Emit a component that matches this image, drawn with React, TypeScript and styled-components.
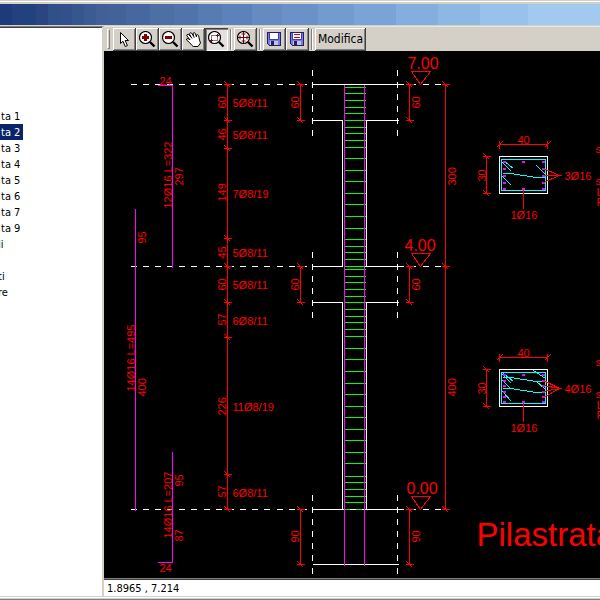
import React, { useState } from "react";
import styled, { createGlobalStyle } from "styled-components";

const GlobalStyle = createGlobalStyle`
  * { box-sizing: border-box; }
  body {
    margin: 0;
    background: #d4d0c8;
    font-family: "DejaVu Sans Condensed", "DejaVu Sans", sans-serif;
    font-size: 11px;
    line-height: 16px;
    color: #000;
  }
`;

const Window = styled.div`
  height: 100vh;
  display: flex;
  flex-direction: column;
  background: #d4d0c8;
  overflow: hidden;
`;

const FrameEdge = styled.div`
  height: 4px;
  flex: none;
  border-top: 1px solid #d4d0c8;
  &::before {
    content: "";
    display: block;
    height: 1px;
    background: #fff;
  }
`;

const TitleBar = styled.header`
  height: 21px;
  flex: none;
  margin-bottom: 1px;
  background: linear-gradient(
    to right,
    #1c3a7c 0 2%, #24407f 2% 4%, #22427e 4% 6%, #2b4583 6% 8%,
    #30508a 8% 10%, #34508c 10% 12%, #36568e 12% 14%, #3c5a94 14% 16%,
    #425f98 16% 18%, #42639a 18% 21%, #4667a0 21% 25%, #4c70a4 25% 29%,
    #5073ac 29% 33%, #577cb4 33% 37%, #5b82ba 37% 42%, #658bc0 42% 47%,
    #6a92c8 47% 53%, #729bd0 53% 59%, #7aa4d8 59% 66%, #84aedd 66% 73%,
    #8eb8e4 73% 80%, #98c2ec 80% 88%, #a2caf1 88% 100%
  );
`;

const Body = styled.div`
  flex: 1;
  min-height: 0;
  display: flex;
`;

const TreePane = styled.nav`
  width: 104px;
  flex: none;
  background: #fff;
  border-top: 1px solid #808080;
  border-right: 2px solid #d4d0c8;
  box-shadow: inset 0 1px #404040;
  padding-top: 81px;
  overflow: hidden;
`;

const Tree = styled.ul`
  list-style: none;
  margin: 0;
  padding: 0;
`;

const TreeRow = styled.li`
  height: 16px;
`;

const TreeItem = styled.button<{ $selected: boolean; $parent: boolean }>`
  display: block;
  height: 16px;
  border: 0;
  padding: 1px 3px 0 ${(p) => (p.$parent ? "0" : "1px")};
  text-indent: ${(p) => (p.$parent ? "-2px" : "0")};
  font: inherit;
  white-space: nowrap;
  color: ${(p) => (p.$selected ? "#fff" : "#000")};
  background: ${(p) => (p.$selected ? "#0a246a" : "transparent")};
`;

const Main = styled.main`
  flex: 1;
  min-width: 0;
  display: flex;
  flex-direction: column;
`;

const Toolbar = styled.div`
  height: 25px;
  flex: none;
  display: flex;
  align-items: center;
  padding-left: 3px;
  border-top: 1px solid #e8e6e0;
  overflow: hidden;
`;

const Grip = styled.span`
  width: 3px;
  height: 20px;
  margin-right: 3px;
  flex: none;
  border: 1px solid #808080;
  border-top-color: #fff;
  border-left-color: #fff;
  background: #d4d0c8;
`;

const Separator = styled.span`
  width: 2px;
  height: 21px;
  margin: 0 2px;
  flex: none;
  border-left: 1px solid #808080;
  border-right: 1px solid #fff;
`;

const ToolButton = styled.button<{ $pressed?: boolean; $wide?: boolean }>`
  width: ${(p) => (p.$wide ? "51px" : "23px")};
  height: 23px;
  flex: none;
  display: flex;
  align-items: center;
  justify-content: center;
  padding: 0;
  font: inherit;
  font-size: 12px;
  color: #000;
  border: 0;
  background: ${(p) => (p.$pressed ? "#e6dfe2" : "#d4d0c8")};
  box-shadow: ${(p) =>
    p.$pressed
      ? "inset 1px 1px #404040, inset 2px 2px #808080, inset -1px -1px #fff"
      : "inset -1px -1px #404040, inset 1px 1px #fff, inset -2px -2px #808080"};
`;

const Icon = styled.svg`
  width: 17px;
  height: 17px;
  display: block;
  fill: none;
`;

const Viewport = styled.section`
  flex: 1;
  min-height: 0;
  background: #000;
  overflow: hidden;
`;

const Drawing = styled.svg`
  display: block;
  width: 100%;
  height: 100%;
  fill: none;
`;

const Label = styled.text<{ $size?: number }>`
  font-family: "Liberation Sans", Arial, sans-serif;
  font-size: ${(p) => p.$size ?? 11}px;
  fill: #ff0000;
`;

const Status = styled.footer`
  height: 18px;
  flex: none;
  padding-left: 3px;
  background: #fff;
  border-top: 1px solid #808080;
  box-shadow: inset 0 1px #404040;
  line-height: 19px;
  white-space: nowrap;
`;

const BottomEdge = styled.div`
  height: 4px;
  flex: none;
  border-bottom: 1px solid #808080;
  &::before {
    content: "";
    display: block;
    height: 1px;
    margin-top: 1px;
    background: #fff;
  }
`;

const WHITE = "#ffffff";
const RED = "#ff0000";
const MAGENTA = "#ff00ff";
const GREEN = "#00ff00";
const CYAN = "#00ffff";
const MAROON = "#800000";

const Lens = ({ children }: { children?: React.ReactNode }) => (
  <Icon viewBox="0 0 17 17" aria-hidden="true">
    <path d="M11 11 L15.5 15.5" stroke="#000" strokeWidth="2.4" />
    <circle cx="6.5" cy="6.5" r="6" fill="#fff" stroke="#000" strokeWidth="1.2" />
    {children}
  </Icon>
);

const ArrowIcon = () => (
  <Icon viewBox="0 0 17 17" aria-hidden="true">
    <path
      d="M4.5 1.5 V12.5 L7 10.2 L9.2 15.5 L11.4 14.6 L9.2 9.5 H12.5 Z"
      fill="#fff" stroke="#000"
    />
  </Icon>
);

const HandIcon = () => (
  <Icon viewBox="0 0 17 17" aria-hidden="true">
    <path
      d="M7 14.5 L4.5 11.5 L1.5 9 Q1 7.4 3 7.6 L5 8.8 L1.8 4.8 Q1.6 3 3.5 3.4 L6 6 L4.4 2.8 Q5 1 6.7 2.2 L8.6 5.2 L8 2.4 Q9 .8 10.4 2.4 L11.4 5.8 L11.5 4 Q13 3 13.6 4.6 L14.5 9 L15.5 12 L13 15.5 H8.5 Z"
      fill="#fff" stroke="#000"
    />
    <path d="M6 6 L7 7.4 M8.6 5.2 L9.2 6.6" stroke="#000" />
  </Icon>
);

const ZoomInIcon = () => (
  <Lens>
    <path d="M6.5 3 V10 M3 6.5 H10" stroke={MAROON} strokeWidth="3" />
  </Lens>
);

const ZoomOutIcon = () => (
  <Lens>
    <path d="M3 6.5 H10" stroke={MAROON} strokeWidth="3" />
  </Lens>
);

const ZoomWindowIcon = () => (
  <Lens>
    <path d="M3.5 4.5 H9.5 V9.5 H3.5 Z" stroke="#000" strokeDasharray="1 1" />
    <path d="M8 4.5 H11 M9.5 3 V6 M2 9.5 H5 M3.5 8 V11" stroke={MAROON} />
  </Lens>
);

const ZoomAllIcon = () => (
  <Lens>
    <path d="M6.5 1 V12 M1 6.5 H12" stroke={MAROON} />
    <path
      d="M4.5 3 H8.5 M4.5 10 H8.5 M3 4.5 V8.5 M10 4.5 V8.5"
      stroke={MAROON}
    />
  </Lens>
);

const SaveIcon = ({ lined }: { lined?: boolean }) => (
  <Icon viewBox="0 0 17 17" aria-hidden="true" shapeRendering="crispEdges">
    <path d="M1.5 1.5 H14.5 V14.5 H3.5 L1.5 12.5 Z" fill="#7878f0" stroke="#202060" />
    <path d="M4 2 H12 V8 H4 Z" fill="#fff" />
    <path d="M4 10 H12 V14 H4 Z" fill="#c4c4cc" />
    <path d="M5 10 H8 V14 H5 Z" fill="#202060" />
    <path d="M3.5 2 V8.5 H12.5 V2" stroke="#4040b0" />
    {lined && <path d="M5 3.5 H11 M5 6.5 H11" stroke="#d00000" />}
  </Icon>
);

const stirrups = [
  87, 93, 100, 107, 113, 120, 127, 133, 140, 147, 158, 170, 181, 193, 204, 216,
  228, 239, 246, 252, 259, 266, 269, 276, 282, 289, 296, 302, 309, 316, 322, 329,
  336, 348, 359, 371, 383, 394, 406, 417, 429, 440, 452, 463, 476, 482, 489, 496,
  502, 509,
];

const Up = ({ x, y, children }: { x: number; y: number; children: string }) => (
  <Label transform={`translate(${x} ${y}) rotate(-90)`}>{children}</Label>
);

// Vertical dimension line with a slashed tick at each station.
const DimV = ({ x, ys }: { x: number; ys: number[] }) => (
  <path
    stroke={RED}
    d={
      `M${x} ${ys[0]} V${ys[ys.length - 1]}` +
      ys.map((y) => ` M${x - 4} ${y} h8 M${x - 3} ${y - 3} l6 6`).join("")
    }
  />
);

const DimH = ({ y, xs }: { y: number; xs: number[] }) => (
  <path
    stroke={RED}
    d={
      `M${xs[0]} ${y} H${xs[xs.length - 1]}` +
      xs.map((x) => ` M${x} ${y - 4} v8 M${x - 3} ${y + 3} l6 -6`).join("")
    }
  />
);

const levels = [
  { y: 84, text: "7.00", x: 407 },
  { y: 266, text: "4.00", x: 404 },
  { y: 509, text: "0.00", x: 406 },
];

const Level = ({ y, text, x }: { y: number; text: string; x: number }) => (
  <>
    <path
      d={`M130 ${y} H442`}
      stroke={WHITE}
      strokeDasharray="6 6 6 6 6 6 6 6 6 6 6 7"
    />
    <path d={`M411 ${y - 13} H430 L420 ${y} Z`} stroke={RED} />
    <Label x={x} y={y - 16} $size={16}>{text}</Label>
  </>
);

interface SectionProps {
  top: number;
  rows: number[];
  ties: string;
  leaders: number[];
  bars: string;
}

const Section = ({ top, rows, ties, leaders, bars }: SectionProps) => (
  <g transform={`translate(0 ${top})`}>
    <path d="M499 0 H547 V37 H499 Z" stroke={WHITE} />
    <path d={`M501 3 H545 V34 H501 Z ${ties}`} stroke={CYAN} />
    {rows.map((y) => (
      <path key={y} d={`M503 ${y} h2 v1 h-2 Z M542 ${y} h2 v1 h-2 Z`} stroke={MAGENTA} />
    ))}
    <path d="M522 5 h2 v1 h-2 Z M522 32 h2 v1 h-2 Z" stroke={MAGENTA} />
    <path
      d={`M523 33 V52 M556 19 H561 ${leaders.map((y) => `M543 ${y} L559 19`).join(" ")}`}
      stroke={RED}
    />
    <DimH y={-12} xs={[499, 547]} />
    <DimV x={486} ys={[0, 37]} />
    <Label x="517" y="-13">40</Label>
    <Up x={485} y={25}>30</Up>
    <Label x="564" y="23">{bars}</Label>
    <Label x="510" y="62">1Ø16</Label>
    <Label x="595" y="-4">s</Label>
    <Label x="595" y="28">s</Label>
    <Label x="596" y="39">L</Label>
    <Label x="596" y="49">P</Label>
  </g>
);

const stirrupLabels: [number, string][] = [
  [106, "5Ø8/11"], [138, "5Ø8/11"], [197, "7Ø8/19"], [256, "5Ø8/11"],
  [288, "5Ø8/11"], [324, "6Ø8/11"], [410, "11Ø8/19"], [496, "6Ø8/11"],
];

const verticalLabels: [number, number, string][] = [
  [171, 208, "12Ø16 L=322"], [182, 185, "297"], [145, 243, "95"],
  [134, 391, "14Ø16 L=495"], [145, 396, "400"],
  [171, 538, "14Ø16 L=207"], [182, 486, "95"], [182, 541, "87"],
  [225, 108, "60"], [225, 140, "46"], [225, 201, "149"], [225, 258, "45"],
  [225, 290, "60"], [225, 325, "57"], [225, 415, "226"], [225, 497, "57"],
  [298, 108, "60"], [298, 290, "60"], [298, 542, "90"],
  [419, 108, "60"], [419, 290, "60"], [419, 542, "90"],
  [455, 185, "300"], [455, 396, "400"],
];

const PillarDrawing = () => (
  <Drawing role="img" aria-label="Pilastrata 2">
    {/* Half-unit shift keeps one-unit strokes on whole pixels. */}
    <g transform="translate(-103.5 -50.5)" shapeRendering="crispEdges">
      <path stroke={GREEN} d={stirrups.map((y) => `M344 ${y} H365`).join(" ")} />
      {levels.map((level) => (
        <Level key={level.y} {...level} />
      ))}
      <path
        stroke={WHITE}
        d="M312 84 H398 M312 120 H342 V266 H312 M398 120 H366 V266 H398
           M312 302 H342 V509 M398 302 H366 V509 M312 509 H343 M365 509 H398 M312 564 H398"
      />
      <path
        stroke={WHITE}
        strokeDasharray="6 6 6 6 6 6 6 6 6 6 6 7"
        d="M312 69 V135 M397 69 V135 M312 251 V318 M397 251 V318 M312 494 V573 M397 494 V573"
      />
      <path stroke={MAGENTA} d="M344 84 V565 M364 84 V565" />
      <path stroke={GREEN} d="M345 266 H364" />
      <path stroke={MAGENTA} d="M157 85 H172 V267 M135 208 V510 M172 451 V562 H157" />

      <DimV x={227} ys={[84, 120, 148, 238, 266, 302, 337, 474, 509]} />
      {[300, 409].map((x) => (
        <g key={x}>
          <DimV x={x} ys={[84, 120]} />
          <DimV x={x} ys={[266, 302]} />
          <DimV x={x} ys={[509, 564]} />
        </g>
      ))}
      <DimV x={445} ys={[84, 266, 509]} />

      {stirrupLabels.map(([y, text]) => (
        <Label key={y} x="232" y={y}>{text}</Label>
      ))}
      {verticalLabels.map(([x, y, text]) => (
        <Up key={`${x}-${y}`} x={x} y={y}>{text}</Up>
      ))}
      <Label x="159" y="84">24</Label>
      <Label x="159" y="571">24</Label>

      <Section
        top={156}
        rows={[5, 12, 19, 26, 32]}
        leaders={[12, 19, 26]}
        ties="M502 17 H510 L536 21 H545 M504 5 L513 12 M502 6 L511 15 M536 9 L545 18 M502 20 L511 29"
        bars="3Ø16"
      />
      <Section
        top={369}
        rows={[5, 11, 16, 22, 27, 32]}
        leaders={[11, 16, 22, 28]}
        ties="M502 8 H510 L536 12 H545 M502 19 H510 L536 23 H545 M503 4 L513 12 M502 5 L511 14 M502 11 L511 20 M502 22 L511 32 M533 1 L545 9 M536 12 L545 20"
        bars="4Ø16"
      />
      <Label x="476" y="545" $size={33}>Pilastrata</Label>
    </g>
  </Drawing>
);

const treeItems = [
  "ta 1", "ta 2", "ta 3", "ta 4", "ta 5", "ta 6", "ta 7", "ta 9", "li", "", "ti", "re",
];

export default function App() {
  const [selected, setSelected] = useState("ta 2");
  return (
    <Window>
      <GlobalStyle />
      <FrameEdge />
      <TitleBar />
      <Body>
        <TreePane>
          <Tree>
            {treeItems.map((item, i) => (
              <TreeRow key={i}>
                {item && (
                  <TreeItem
                    $selected={item === selected}
                    $parent={!item.startsWith("ta")}
                    onClick={() => setSelected(item)}
                  >
                    {item}
                  </TreeItem>
                )}
              </TreeRow>
            ))}
          </Tree>
        </TreePane>
        <Main>
          <Toolbar role="toolbar">
            <Grip />
            <ToolButton aria-label="Seleziona"><ArrowIcon /></ToolButton>
            <ToolButton aria-label="Ingrandisci"><ZoomInIcon /></ToolButton>
            <ToolButton aria-label="Riduci"><ZoomOutIcon /></ToolButton>
            <ToolButton aria-label="Sposta"><HandIcon /></ToolButton>
            <ToolButton $pressed aria-pressed="true" aria-label="Zoom finestra"><ZoomWindowIcon /></ToolButton>
            <Separator />
            <ToolButton aria-label="Zoom tutto"><ZoomAllIcon /></ToolButton>
            <Separator />
            <ToolButton aria-label="Salva"><SaveIcon /></ToolButton>
            <ToolButton aria-label="Salva relazione"><SaveIcon lined /></ToolButton>
            <Separator />
            <ToolButton $wide>Modifica</ToolButton>
          </Toolbar>
          <Viewport>
            <PillarDrawing />
          </Viewport>
          <Status>1.8965 , 7.214</Status>
        </Main>
      </Body>
      <BottomEdge />
    </Window>
  );
}
